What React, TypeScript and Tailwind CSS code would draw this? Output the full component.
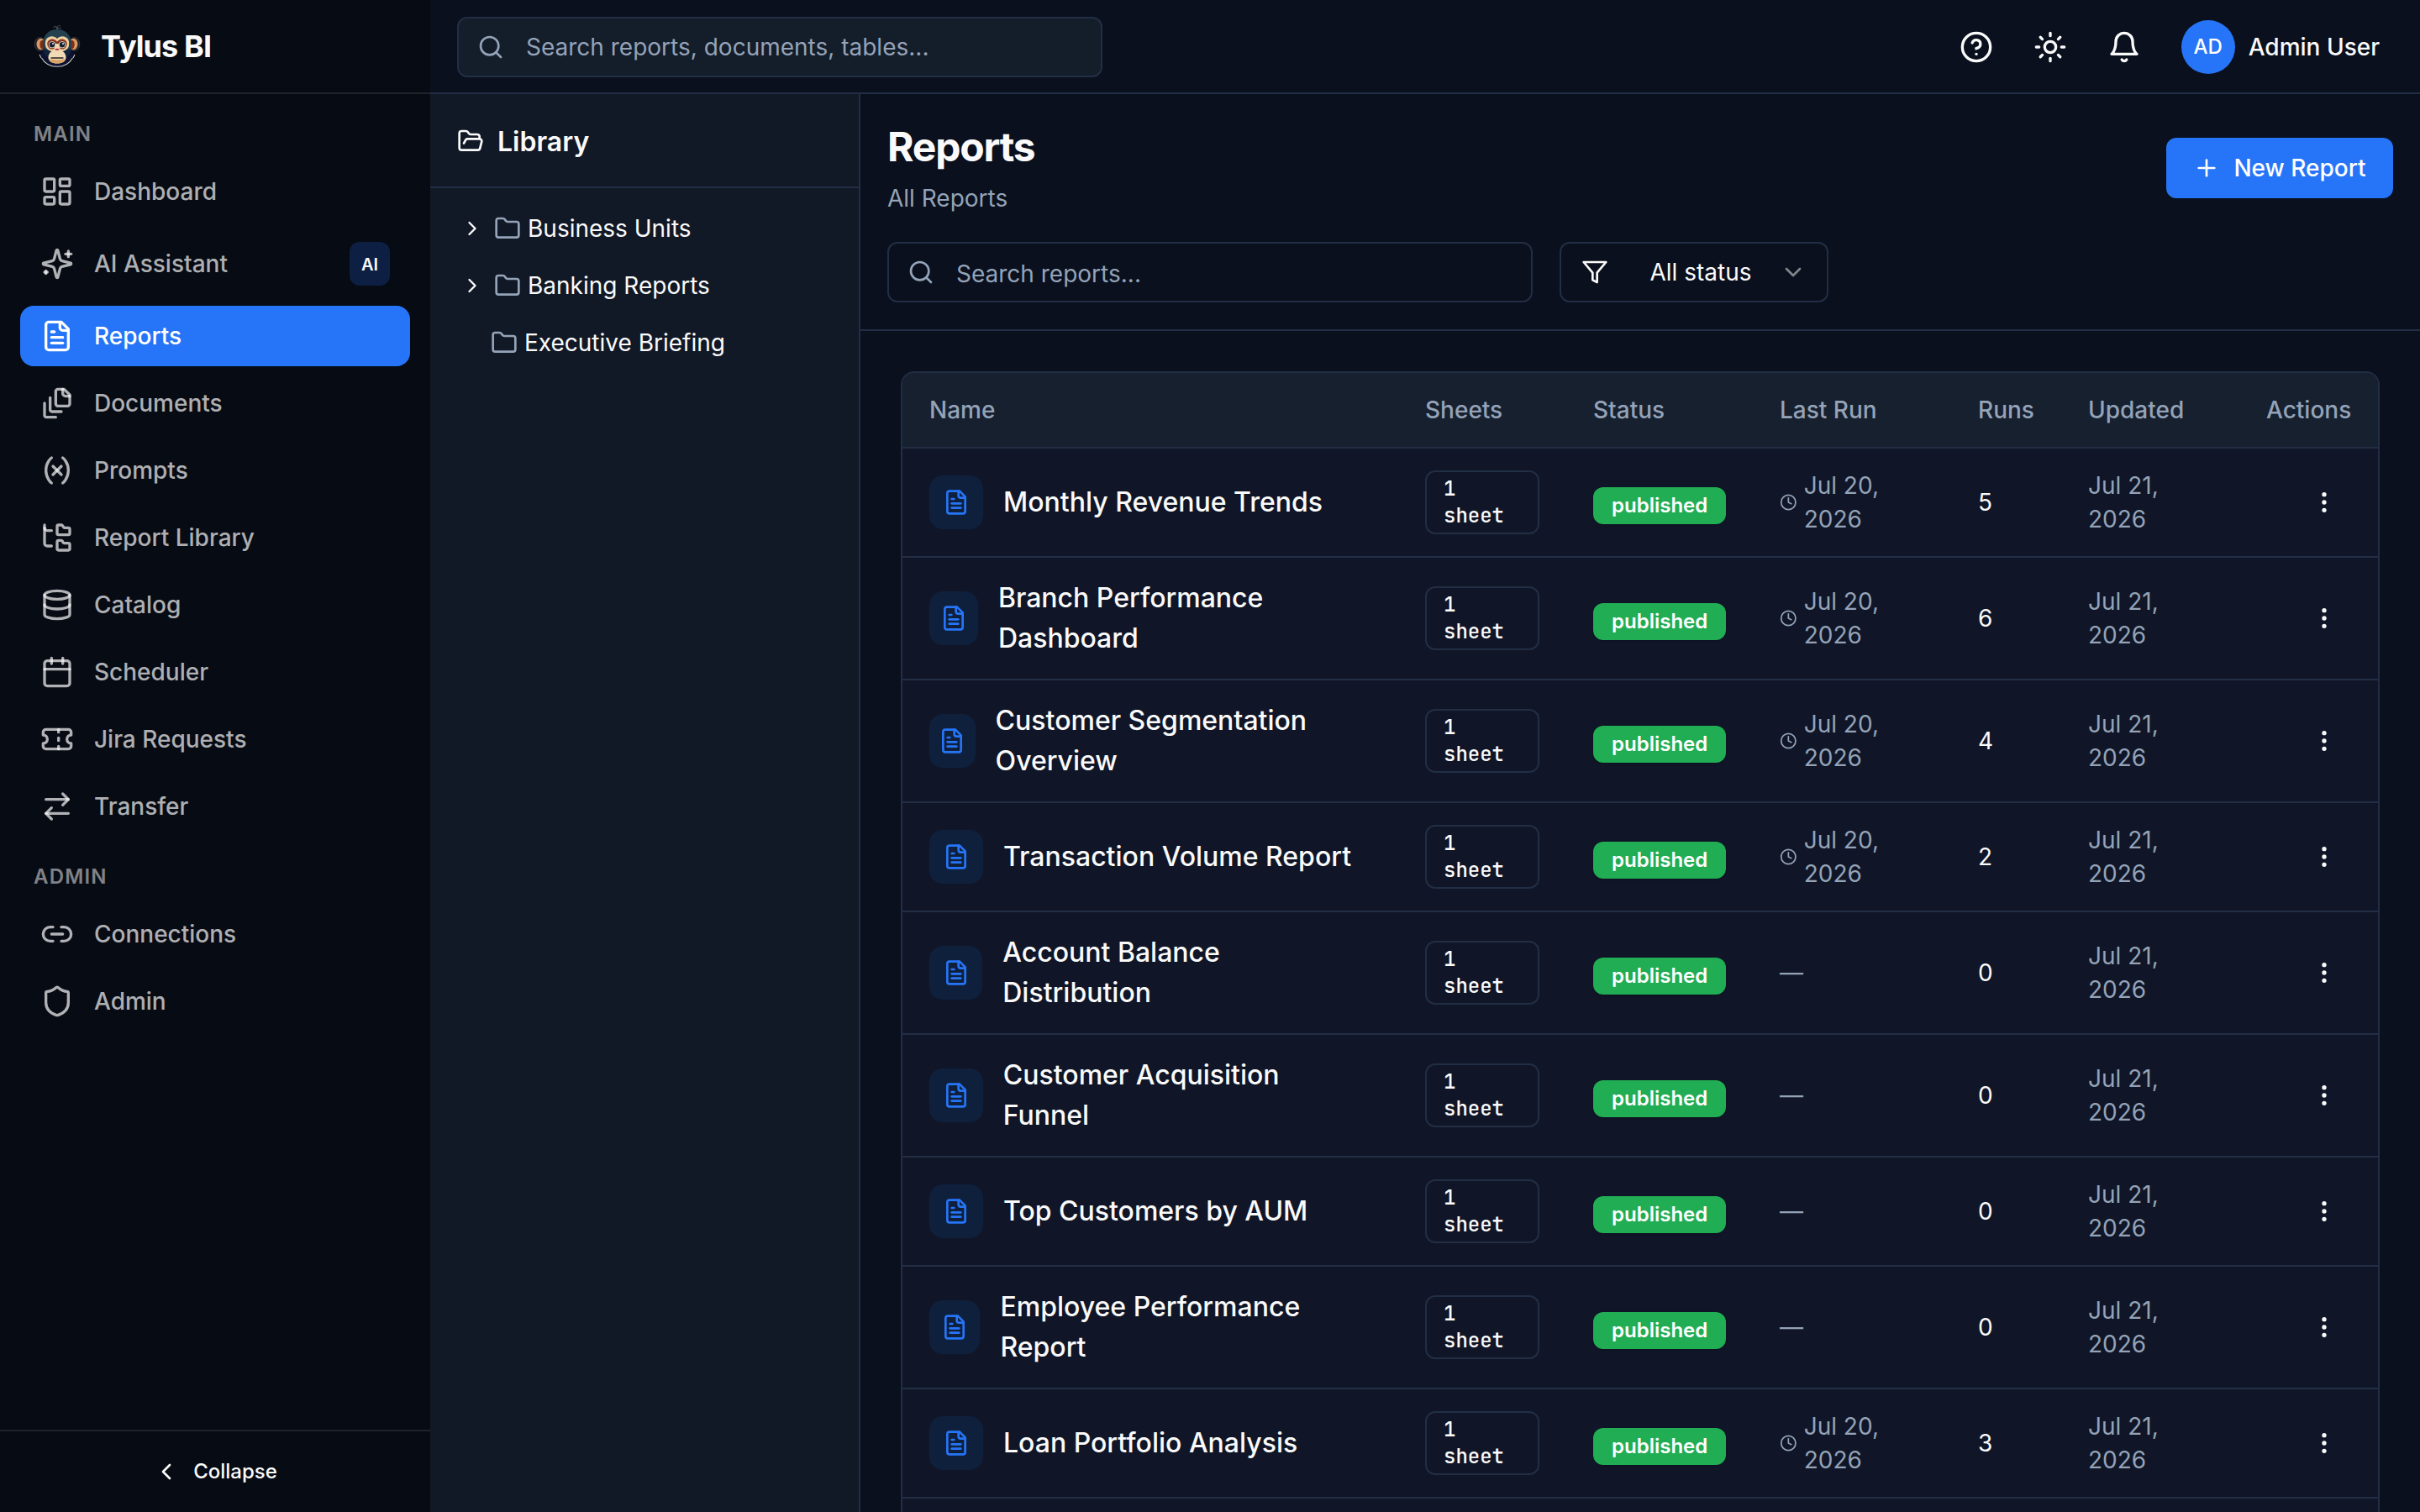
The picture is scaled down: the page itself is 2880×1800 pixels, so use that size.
import React from 'react';
import {
  ArrowRightLeft,
  Calendar,
  ChevronDown,
  ChevronLeft,
  ChevronRight,
  Clock,
  Database,
  EllipsisVertical,
  Folder,
  FolderOpen,
  FolderTree,
  HelpCircle,
  LayoutDashboard,
  Link2,
  Plus,
  Search,
  Shield,
  Sun,
  Ticket,
} from 'lucide-react';

interface IconProps {
  className?: string;
}

const Svg = ({ className, children }: IconProps & { children: React.ReactNode }) => (
  <svg
    viewBox="0 0 24 24"
    fill="none"
    stroke="currentColor"
    strokeWidth={2}
    strokeLinecap="round"
    strokeLinejoin="round"
    className={className}
  >
    {children}
  </svg>
);

const ReportIcon = ({ className }: IconProps) => (
  <Svg className={className}>
    <path d="M15 2H6a2 2 0 0 0-2 2v16a2 2 0 0 0 2 2h12a2 2 0 0 0 2-2V7Z" />
    <path d="M14 2v4a2 2 0 0 0 2 2h4" />
    <path d="M10 9H8" />
    <path d="M16 13H8" />
    <path d="M16 17H8" />
  </Svg>
);

const SparklesIcon = ({ className }: IconProps) => (
  <Svg className={className}>
    <path d="M9.937 15.5A2 2 0 0 0 8.5 14.063l-6.135-1.582a.5.5 0 0 1 0-.962L8.5 9.936A2 2 0 0 0 9.937 8.5l1.582-6.135a.5.5 0 0 1 .963 0L14.063 8.5A2 2 0 0 0 15.5 9.937l6.135 1.581a.5.5 0 0 1 0 .964L15.5 14.063a2 2 0 0 0-1.437 1.437l-1.582 6.135a.5.5 0 0 1-.963 0z" />
    <path d="M20 3v4" />
    <path d="M22 5h-4" />
    <path d="M4 17v2" />
    <path d="M5 18H3" />
  </Svg>
);

const DocumentsIcon = ({ className }: IconProps) => (
  <Svg className={className}>
    <path d="M21 7h-3a2 2 0 0 1-2-2V2" />
    <path d="M21 6v6.5c0 .8-.7 1.5-1.5 1.5h-7c-.8 0-1.5-.7-1.5-1.5v-9c0-.8.7-1.5 1.5-1.5H17Z" />
    <path d="M7 8v8.8c0 .3.2.6.4.8.2.2.5.4.8.4H15" />
    <path d="M3 12v8.8c0 .3.2.6.4.8.2.2.5.4.8.4H11" />
  </Svg>
);

const PromptsIcon = ({ className }: IconProps) => (
  <Svg className={className}>
    <path d="M8 21s-4-3-4-9 4-9 4-9" />
    <path d="M16 3s4 3 4 9-4 9-4 9" />
    <path d="M15 9l-6 6" />
    <path d="M9 9l6 6" />
  </Svg>
);

const BellIcon = ({ className }: IconProps) => (
  <Svg className={className}>
    <path d="M6 8a6 6 0 0 1 12 0c0 7 3 9 3 9H3s3-2 3-9" />
    <path d="M10.3 21a1.94 1.94 0 0 0 3.4 0" />
  </Svg>
);

const FilterIcon = ({ className }: IconProps) => (
  <Svg className={className}>
    <polygon points="22 3 2 3 10 12.46 10 19 14 21 14 12.46 22 3" />
  </Svg>
);

const MonkeyLogo = ({ className }: IconProps) => (
  <svg viewBox="0 0 56 56" fill="none" className={className}>
    <path d="M8 37c2 10 10 15.5 20 15.5S46 47 48 37l-6-8H14Z" fill="#0d1230" />
    <path d="M7 38l2 4M49 38l-2 4M9.5 42c4 7 10.5 10.3 18.5 10.3S42.5 49 46.5 42" stroke="#c9cbc8" strokeWidth="1.1" />
    <ellipse cx="7.5" cy="25.5" rx="6.3" ry="8" fill="#1a1c26" stroke="#4a4647" strokeWidth=".7" />
    <ellipse cx="48.5" cy="25.5" rx="6.3" ry="8" fill="#1a1c26" stroke="#4a4647" strokeWidth=".7" />
    <ellipse cx="8.5" cy="25.5" rx="5" ry="6.8" fill="#d99a62" />
    <ellipse cx="47.5" cy="25.5" rx="5" ry="6.8" fill="#d99a62" />
    <ellipse cx="10.5" cy="26" rx="3.2" ry="5.2" fill="#7d2f1c" />
    <ellipse cx="45.5" cy="26" rx="3.2" ry="5.2" fill="#7d2f1c" />
    <path d="M28 8c-10.5 0-17 7-17 18 0 5 1.500 10 4 13h26c2.500-3 4-8 4-13 0-11-6.500-18-17-18Z" fill="#23414f" />
    <path d="M12 30c0 5 2 10 6 12h20c4-2 6-7 6-12-4 5-28 5-32 0Z" fill="#10233a" />
    <path d="M23 6c2-2 4-1.500 5 1 0-3 2-4 4-3M26 4c1 0 2 1 2 4 1-2 3-2 5-1" stroke="#5c6068" strokeWidth=".8" />
    <path d="M28 19c-3-3-7-3.500-10.500-1.500S13.500 23 14 27s4 6.500 7.500 7h13c3.500-.5 7-3 7.500-7s0-7.500-3.500-9.500S31 16 28 19Z" fill="#edcfa0" />
    <path d="M28 22.500c-3-3-6-3.700-9-2s-3.500 5-1.500 8.500 6 3 8.500 1l2-2 2 2c2.500 2 6.500 2.500 8.500-1s1.500-6.800-1.500-8.500-6-1-9 2Z" fill="#86341f" />
    <circle cx="22" cy="26.3" r="4" fill="#e3e3df" />
    <circle cx="34" cy="26.3" r="4" fill="#e3e3df" />
    <circle cx="22" cy="26.3" r="3.2" fill="#17212f" />
    <circle cx="34" cy="26.3" r="3.2" fill="#17212f" />
    <circle cx="23" cy="25" r=".9" fill="#fff" />
    <circle cx="35" cy="25" r=".9" fill="#fff" />
    <path d="M26.3 25h3.400l2.300 8h-8Z" fill="#f0d8b0" />
    <path d="M28 32c-6 0-10.500 4-10.500 9.500 0 4.500 4.500 7 10.500 7s10.500-2.500 10.500-7C38.500 36 34 32 28 32Z" fill="#f0dbb4" />
    <path d="M18 43c1 4 5 5.500 10 5.500S37 47 38 43c-3 1.500-17 1.500-20 0Z" fill="#d8a468" />
    <path d="M25.3 31.500c1.500-1 4-1 5.400 0-.4 1.400-1.500 1.600-2.700 1.200-1.200.4-2.300.2-2.700-1.200Z" fill="#b9374a" />
    <path d="M21 42h14" stroke="#2a1f24" strokeWidth="1.3" strokeLinecap="round" />
  </svg>
);

interface NavItem {
  label: string;
  icon: React.ComponentType<IconProps>;
  active?: boolean;
  badge?: string;
}

const mainNav: NavItem[] = [
  { label: 'Dashboard', icon: LayoutDashboard },
  { label: 'AI Assistant', icon: SparklesIcon, badge: 'AI' },
  { label: 'Reports', icon: ReportIcon, active: true },
  { label: 'Documents', icon: DocumentsIcon },
  { label: 'Prompts', icon: PromptsIcon },
  { label: 'Report Library', icon: FolderTree },
  { label: 'Catalog', icon: Database },
  { label: 'Scheduler', icon: Calendar },
  { label: 'Jira Requests', icon: Ticket },
  { label: 'Transfer', icon: ArrowRightLeft },
];

const adminNav: NavItem[] = [
  { label: 'Connections', icon: Link2 },
  { label: 'Admin', icon: Shield },
];

const folders = [
  { name: 'Business Units', expandable: true },
  { name: 'Banking Reports', expandable: true },
  { name: 'Executive Briefing', expandable: false },
];

const columns = ['Name', 'Sheets', 'Status', 'Last Run', 'Runs', 'Updated', 'Actions'];

const reports = [
  { name: 'Monthly Revenue Trends', lastRun: 'Jul 20, 2026', runs: 5 },
  { name: 'Branch Performance Dashboard', lastRun: 'Jul 20, 2026', runs: 6 },
  { name: 'Customer Segmentation Overview', lastRun: 'Jul 20, 2026', runs: 4 },
  { name: 'Transaction Volume Report', lastRun: 'Jul 20, 2026', runs: 2 },
  { name: 'Account Balance Distribution', lastRun: null, runs: 0 },
  { name: 'Customer Acquisition Funnel', lastRun: null, runs: 0 },
  { name: 'Top Customers by AUM', lastRun: null, runs: 0 },
  { name: 'Employee Performance Report', lastRun: null, runs: 0 },
  { name: 'Loan Portfolio Analysis', lastRun: 'Jul 20, 2026', runs: 3 },
];

const NavSection = ({ title, items }: { title: string; items: NavItem[] }) => (
  <div>
    <h3 className="px-4 text-[24px] leading-8 font-semibold tracking-wider text-[#fafafa]/50">{title}</h3>
    <nav className="mt-4 flex flex-col gap-2">
      {items.map(({ label, icon: Icon, active, badge }) => (
        <a
          key={label}
          className={`flex items-center gap-6 rounded-2xl px-6 py-4 text-[28px] leading-10 font-medium ${
            active ? 'bg-[#2675f8] text-white' : 'text-[#fafafa]/70'
          }`}
        >
          <Icon className="size-10 shrink-0" />
          <span className="flex-1">{label}</span>
          {badge && (
            <span className="flex h-[52px] w-12 items-center justify-center rounded-xl bg-[#0d2043] pt-0.5 text-[20px] font-semibold text-[#fafafa]">
              {badge}
            </span>
          )}
        </a>
      ))}
    </nav>
  </div>
);

const Sidebar = () => (
  <aside className="flex w-[512px] shrink-0 flex-col bg-[#070b14]">
    <div className="flex h-28 shrink-0 items-center gap-6 border-b-2 border-white/10 px-10">
      <MonkeyLogo className="size-14" />
      <span className="text-[36px] font-bold tracking-tight text-[#fafafa]">Tylus BI</span>
    </div>
    <div className="flex flex-1 flex-col gap-8 px-6 pt-8">
      <NavSection title="MAIN" items={mainNav} />
      <NavSection title="ADMIN" items={adminNav} />
    </div>
    <div className="flex h-[98px] items-center justify-center gap-4 border-t-2 border-white/10 text-[24px] font-medium text-[#fafafa]">
      <ChevronLeft className="size-8" />
      Collapse
    </div>
  </aside>
);

const Header = () => (
  <header className="flex h-28 shrink-0 items-center justify-between border-b-2 border-[#222e45] px-8 pt-0.5">
    <div className="flex h-[72px] w-[768px] items-center gap-[26px] rounded-xl border-2 border-[#222e45] bg-[#141d2a] px-[22px] text-[28px] text-[#94a3b8]">
      <Search className="size-8" />
      <span>Search reports, documents, tables...</span>
    </div>
    <div className="flex items-center gap-4 text-[#fafafa]">
      <button className="flex size-[72px] items-center justify-center">
        <HelpCircle className="size-10" />
      </button>
      <button className="flex size-[72px] items-center justify-center">
        <Sun className="size-10" />
      </button>
      <button className="flex size-[72px] items-center justify-center">
        <BellIcon className="size-10" />
      </button>
      <button className="flex items-center gap-4 px-4 text-[28px] font-medium">
        <span className="flex size-16 items-center justify-center rounded-full bg-[#2675f8] text-[24px] text-white">AD</span>
        Admin User
      </button>
    </div>
  </header>
);

const LibraryPanel = () => (
  <div className="w-[512px] shrink-0 border-r-2 border-[#222e45] bg-[#121926] text-[#fafafa]">
    <div className="flex h-28 items-center gap-4 border-b-2 border-[#222e45] px-8 pt-0.5 text-[32px] font-semibold">
      <FolderOpen className="size-8" />
      <span className="pt-0.5">Library</span>
    </div>
    <div className="flex flex-col gap-1 p-4">
      {folders.map((folder) => (
        <div key={folder.name} className="flex h-16 items-center text-[28px]">
          {folder.expandable ? (
            <span className="flex w-15 justify-center pl-2">
              <ChevronRight className="size-7" />
            </span>
          ) : (
            <span className="w-14" />
          )}
          <Folder className="mr-2 size-8 text-[#94a3b8]" />
          {folder.name}
        </div>
      ))}
    </div>
  </div>
);

const PageHeader = () => (
  <div className="flex flex-col gap-8 border-b-2 border-[#222e45] p-8">
    <div className="flex items-center justify-between">
      <div>
        <h1 className="text-[48px] leading-[62px] font-bold tracking-tight text-[#fafafa]">Reports</h1>
        <p className="mt-2.5 text-[28px] leading-10 text-[#94a3b8]">All Reports</p>
      </div>
      <button className="flex h-[72px] w-[270px] items-center justify-center gap-4 rounded-xl bg-[#2675f8] text-[28px] font-medium whitespace-nowrap text-white">
        <Plus className="size-8" />
        New Report
      </button>
    </div>
    <div className="flex gap-8">
      <div className="flex h-[72px] w-[768px] items-center gap-[26px] rounded-xl border-2 border-[#222e45] px-[22px] text-[28px] text-[#94a3b8]">
        <Search className="size-8" />
        <span className="pt-[3px]">Search reports...</span>
      </div>
      <div className="flex h-[72px] w-80 items-center justify-between rounded-xl border-2 border-[#222e45] px-6 text-[28px] text-[#fafafa]">
        <FilterIcon className="mr-4 size-8" />
        <span>All status</span>
        <ChevronDown className="size-8 opacity-50" />
      </div>
    </div>
  </div>
);

const ReportsTable = () => (
  <div className="rounded-2xl border-2 border-[#222e45] bg-[#101627]">
    <table className="w-full table-fixed border-separate border-spacing-0 text-[28px] leading-10 text-[#fafafa]">
      <colgroup>
        <col className="w-[590px]" />
        <col className="w-[200px]" />
        <col className="w-[222px]" />
        <col className="w-[236px]" />
        <col className="w-[131px]" />
        <col className="w-[212px]" />
        <col />
      </colgroup>
      <thead>
        <tr className="text-left text-[#94a3b8]">
          {columns.map((column) => (
            <th
              key={column}
              className="h-[90px] border-b-2 border-[#222e45] bg-[#17202f] px-8 font-medium first:rounded-tl-[14px] last:rounded-tr-[14px] last:text-right"
            >
              {column}
            </th>
          ))}
        </tr>
      </thead>
      <tbody className="[&_td]:border-b-2 [&_td]:border-[#222e45] [&_td]:px-8">
        {reports.map((report) => (
          <tr key={report.name}>
            <td className="py-6">
              <div className="flex items-center gap-6">
                <div className="flex h-16 w-16 items-center justify-center rounded-2xl bg-[#0f203d]">
                  <ReportIcon className="size-8 text-[#2675f8]" />
                </div>
                <div className="text-[32px] leading-[48px] font-medium">{report.name}</div>
              </div>
            </td>
            <td>
              <div className="flex rounded-xl border-2 border-[#222e45] px-5 py-1 font-['JetBrains_Mono','DejaVu_Sans_Mono',monospace] text-[24px] leading-8 font-medium">
                1 sheet
              </div>
            </td>
            <td>
              <div className="flex pt-2">
                <span className="rounded-xl bg-[#20ad54] px-[22px] py-1.5 text-[24px] leading-8 font-semibold text-white shadow-sm">
                  published
                </span>
              </div>
            </td>
            <td className="text-[#94a3b8]">
              {report.lastRun ? (
                <div className="flex items-center gap-2">
                  <Clock className="size-6" />
                  <div>{report.lastRun}</div>
                </div>
              ) : (
                '—'
              )}
            </td>
            <td>{report.runs}</td>
            <td className="py-6 text-[#94a3b8]">Jul 21, 2026</td>
            <td>
              <div className="ml-auto flex size-16 items-center justify-center">
                <EllipsisVertical className="size-8" />
              </div>
            </td>
          </tr>
        ))}
        {/* next row, only its top edge is in view */}
        <tr>
          <td colSpan={7} className="h-[130px]" />
        </tr>
      </tbody>
    </table>
  </div>
);

export default function App() {
  return (
    <div className="flex h-[1800px] w-[2880px] overflow-hidden bg-[#0a101d] font-['Inter',sans-serif]">
      <Sidebar />
      <div className="flex min-w-0 flex-1 flex-col">
        <Header />
        <div className="flex min-h-0 flex-1">
          <LibraryPanel />
          <main className="min-w-0 flex-1 overflow-hidden">
            <PageHeader />
            <div className="h-[1406px] p-12">
              <ReportsTable />
            </div>
          </main>
        </div>
      </div>
    </div>
  );
}
